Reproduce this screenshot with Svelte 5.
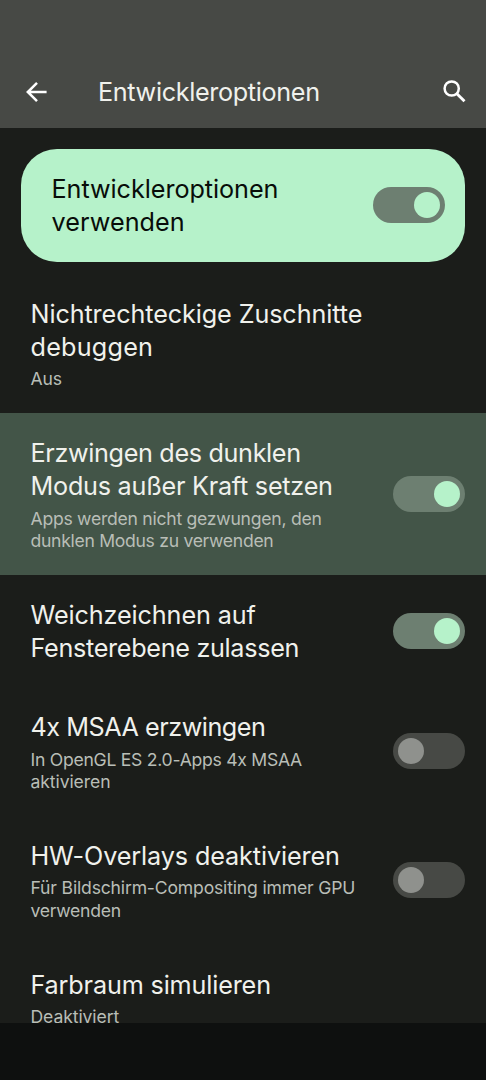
<script lang="ts">
	// each line is [text, letter-spacing in px]
	type Line = [string, number];
	type Option = { title: Line[]; summary?: Line[]; on?: boolean; highlighted?: boolean };

	let enabled = $state(true);

	let options: Option[] = $state([
		{
			title: [['Nichtrechteckige Zuschnitte', -0.1], ['debuggen', 0.22]],
			summary: [['Aus', -0.2]]
		},
		{
			title: [['Erzwingen des dunklen', -0.34], ['Modus außer Kraft setzen', -0.24]],
			summary: [['Apps werden nicht gezwungen, den', -0.26], ['dunklen Modus zu verwenden', -0.3]],
			on: true,
			highlighted: true
		},
		{
			title: [['Weichzeichnen auf', -0.11], ['Fensterebene zulassen', -0.31]],
			on: true
		},
		{
			title: [['4x MSAA erzwingen', -0.47]],
			summary: [['In OpenGL ES 2.0-Apps 4x MSAA', -0.27], ['aktivieren', -0.1]],
			on: false
		},
		{
			title: [['HW-Overlays deaktivieren', -0.11]],
			summary: [['Für Bildschirm-Compositing immer GPU', -0.18], ['verwenden', -0.26]],
			on: false
		},
		{
			title: [['Farbraum simulieren', -0.15]],
			summary: [['Deaktiviert', -0.1]]
		}
	]);
</script>

{#snippet lines(items: Line[])}
	{#each items as [text, tracking]}
		<span class="line" style="letter-spacing: {tracking}px">{text}</span>
	{/each}
{/snippet}

<div class="screen">
	<header>
		<button class="icon back" aria-label="Zurück">
			<svg width="22" height="22" viewBox="0 0 22 22">
				<path d="M20.6 11H2M11 1.8L1.8 11l9.2 9.2" fill="none" stroke="#fff" stroke-width="2.5" />
			</svg>
		</button>
		<h1>Entwickleroptionen</h1>
		<button class="icon search" aria-label="Suchen">
			<svg width="24" height="24" viewBox="0 0 24 24">
				<circle cx="8.7" cy="8.5" r="7.1" fill="none" stroke="#fff" stroke-width="2.5" />
				<path d="M13.4 13.2l8.1 8.1" stroke="#fff" stroke-width="2.9" />
			</svg>
		</button>
	</header>

	<main>
		<section class="master">
			<div class="title">{@render lines([['Entwickleroptionen', -0.05], ['verwenden', 0.06]])}</div>
			<button class="switch on" class:off={!enabled} role="switch" aria-checked={enabled} aria-label="Entwickleroptionen" onclick={() => (enabled = !enabled)}>
				<span class="thumb"></span>
			</button>
		</section>

		{#each options as option}
			<section class="option" class:highlighted={option.highlighted}>
				<div class="text">
					<div class="title">{@render lines(option.title)}</div>
					{#if option.summary}
						<div class="summary">{@render lines(option.summary)}</div>
					{/if}
				</div>
				{#if option.on !== undefined}
					<button class="switch" class:off={!option.on} role="switch" aria-checked={option.on} aria-label={option.title[0][0]} onclick={() => (option.on = !option.on)}>
						<span class="thumb"></span>
					</button>
				{/if}
			</section>
		{/each}
	</main>

	<footer></footer>
</div>

<style>
	:global(body) {
		margin: 0;
		background: #1b1d1a;
	}

	.screen {
		display: flex;
		flex-direction: column;
		width: 100%;
		height: 1080px;
		overflow: hidden;
		background: #1b1d1a;
		color: #f0f1ec;
		font-family: Inter, Roboto, sans-serif;
	}

	header {
		display: flex;
		align-items: center;
		flex: none;
		box-sizing: border-box;
		height: 128px;
		padding: 56px 19px 0 26px;
		background: #474945;
	}

	button {
		padding: 0;
		border: 0;
		background: none;
		cursor: pointer;
	}

	.icon {
		display: flex;
	}

	.search {
		margin-left: auto;
	}

	h1 {
		margin: 0 0 0 50px;
		font-size: 25.2px;
		font-weight: 400;
		line-height: 33px;
		letter-spacing: -0.34px;
	}

	main {
		flex: 1;
		min-height: 0;
		overflow: hidden;
	}

	.master {
		display: flex;
		align-items: center;
		justify-content: space-between;
		box-sizing: border-box;
		height: 112.5px;
		margin: 21px 21px 12px;
		padding: 0 20.5px 0 30.5px;
		border-radius: 36px;
		background: #b6f2ca;
		color: #080d09;
	}

	.master .title {
		padding-top: 2px;
	}

	.option {
		display: flex;
		align-items: center;
		justify-content: space-between;
		padding: 23.2px 21px 23.2px 30.5px;
	}

	/* the text sits slightly below the row's centre, the switch does not */
	.text {
		margin: 0.9px 0 -0.9px;
	}

	.highlighted {
		background: #435548;
	}

	.line {
		display: block;
		white-space: nowrap;
	}

	.title {
		font-size: 25.2px;
		line-height: 33px;
	}

	.summary {
		padding-top: 4.6px;
		color: #b9beb7;
		font-size: 17.6px;
		line-height: 22.4px;
	}

	.switch {
		display: flex;
		align-items: center;
		justify-content: flex-end;
		flex: none;
		box-sizing: border-box;
		width: 72px;
		height: 36px;
		padding: 0 5px;
		border-radius: 18px;
		background: #6d7f71;
	}

	.thumb {
		width: 26px;
		height: 26px;
		border-radius: 50%;
		background: #b6f2ca;
	}

	.switch.off {
		justify-content: flex-start;
		background: #474945;
	}

	.off .thumb {
		background: #8f918d;
	}

	footer {
		flex: none;
		height: 57px;
		background: #0e100f;
	}
</style>
